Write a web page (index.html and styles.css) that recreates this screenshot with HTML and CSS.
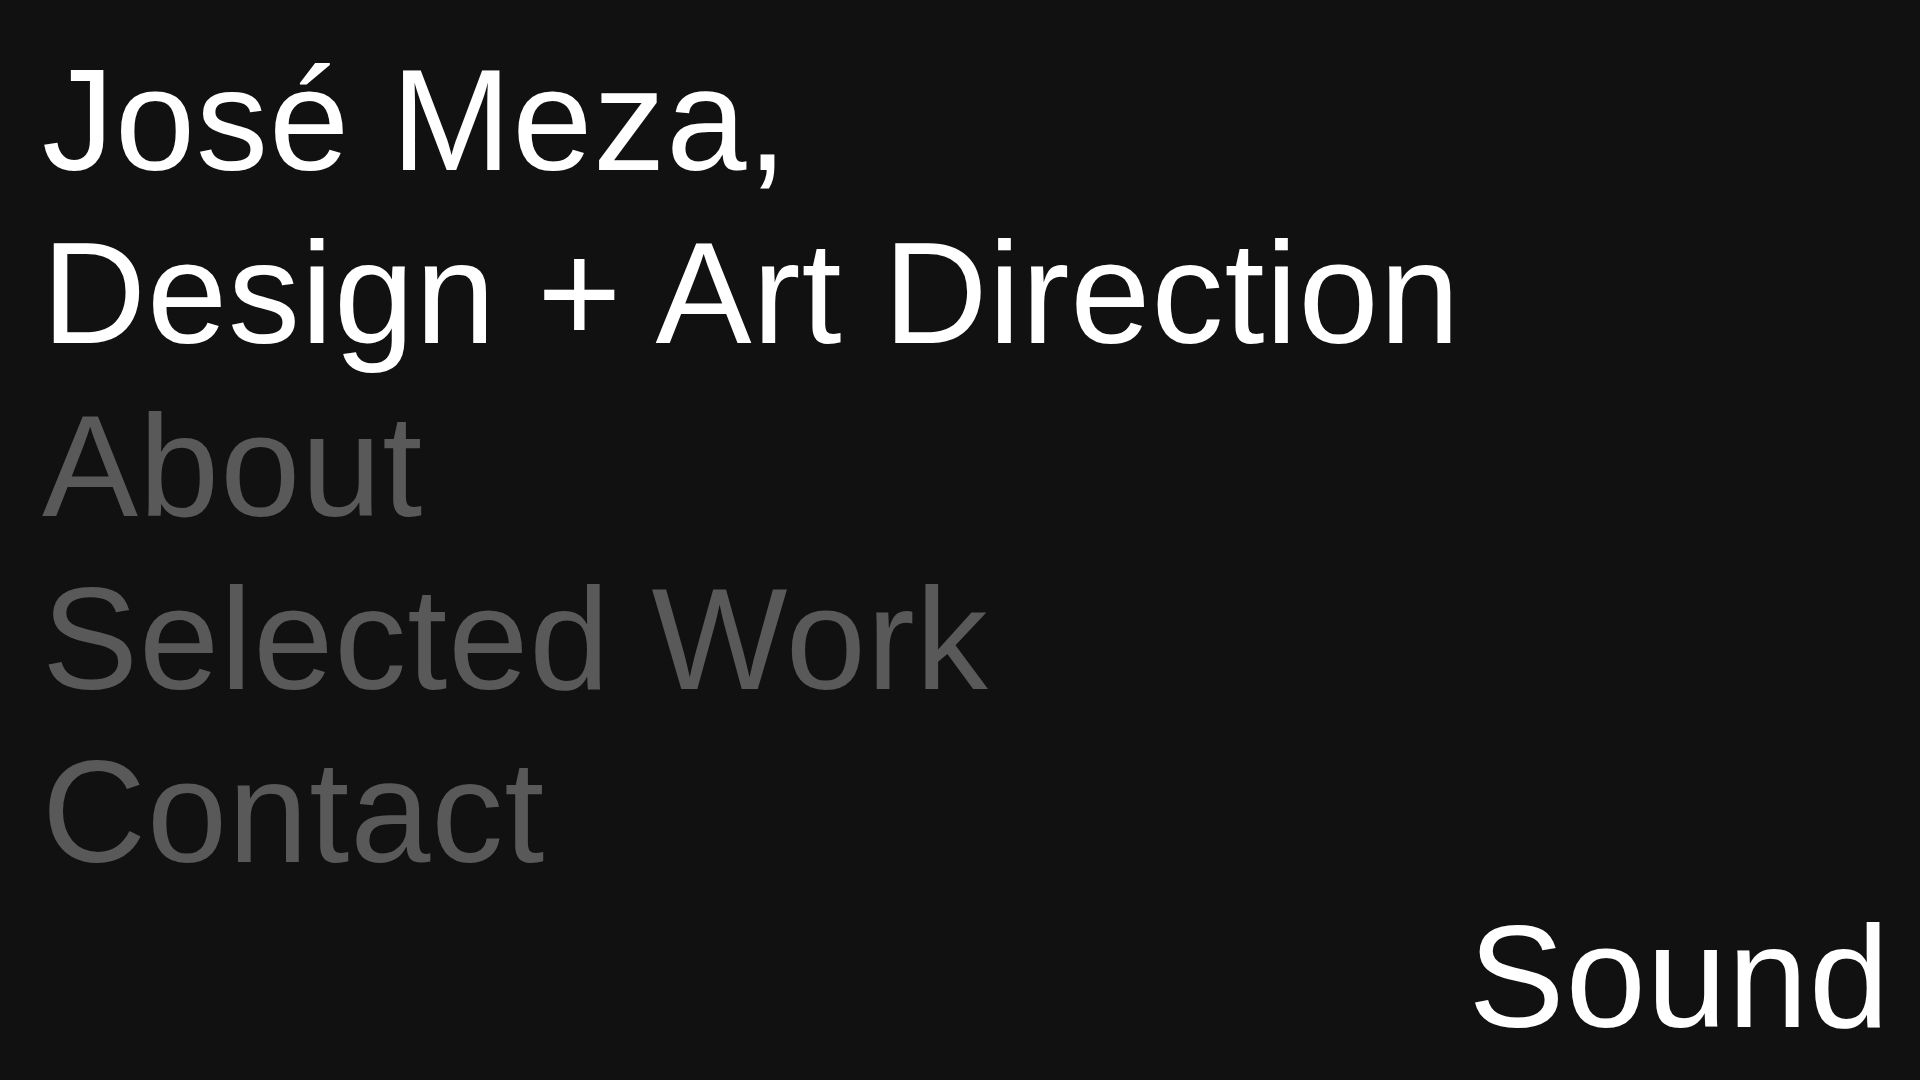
FILE: index.html
```html
<!DOCTYPE html>
<html lang="en">
<head>
<meta charset="utf-8">
<title>José Meza</title>
<link rel="stylesheet" href="styles.css">
</head>
<body>
<main class="page">
  <header class="intro">
    <h1 class="line line-white">José Meza,</h1>
    <p class="line line-white">Design + Art Direction</p>
  </header>
  <nav class="menu">
    <a class="line line-gray" href="#about">About</a>
    <a class="line line-gray" href="#work">Selected Work</a>
    <a class="line line-gray" href="#contact">Contact</a>
  </nav>
  <button class="sound" type="button">Sound</button>
</main>
</body>
</html>
```
FILE: styles.css
```css
* { box-sizing: border-box; }
html, body {
  margin: 0;
  padding: 0;
  height: 100%;
  background: #111111;
}
.page {
  height: 100vh;
  display: flex;
  flex-direction: column;
  padding: 34px 30px 30px 42px;
  font-family: "Liberation Sans", Arial, sans-serif;
  font-size: 144px;
  overflow: hidden;
}
.intro, .menu {
  display: flex;
  flex-direction: column;
  margin: 0;
}
.line {
  display: block;
  margin: 0;
  font-size: 144px;
  font-weight: 400;
  line-height: 173px;
  text-decoration: none;
  white-space: nowrap;
  letter-spacing: 1px;
}
.line-white { color: #ffffff; }
.line-gray { color: #595959; }
.sound {
  margin-top: auto;
  align-self: flex-end;
  background: none;
  border: 0;
  padding: 0;
  color: #ffffff;
  font-family: inherit;
  font-size: 144px;
  line-height: 144px;
  letter-spacing: 1px;
  cursor: pointer;
}
```
